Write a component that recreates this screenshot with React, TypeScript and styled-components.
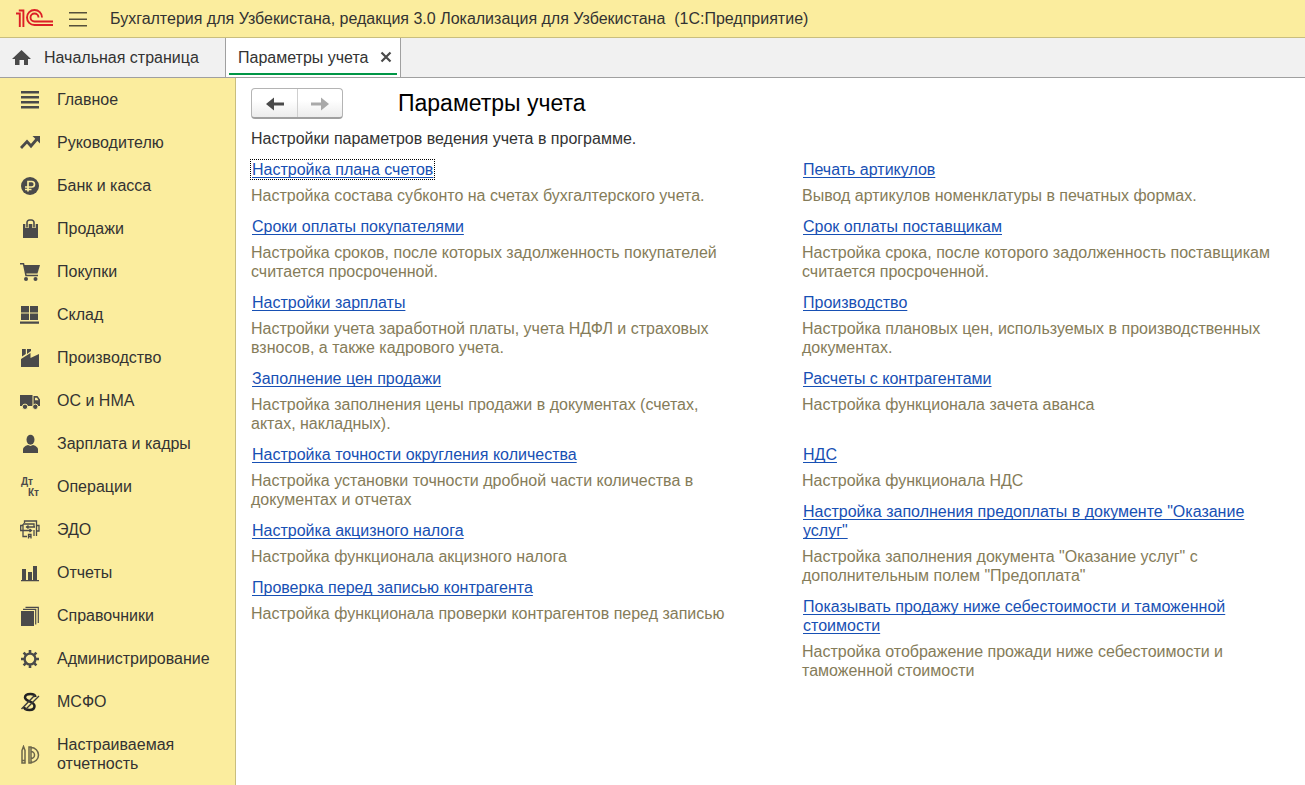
import React from "react";
import styled, { createGlobalStyle, css } from "styled-components";

const GlobalStyle = createGlobalStyle`
  *, *::before, *::after { box-sizing: border-box; }
  body {
    margin: 0;
    background: #ffffff;
    color: #333333;
    font: 16px/19px "Liberation Sans", Arial, sans-serif;
  }
  button { font: inherit; color: inherit; cursor: pointer; }
`;

const Page = styled.div`
  min-height: 100vh;
  display: flex;
  flex-direction: column;
`;

const TitleBar = styled.header`
  display: flex;
  align-items: center;
  height: 38px;
  padding: 0 16px;
  background: #fbed9e;
  border-bottom: 1px solid #c9be7e;
`;

const MenuButton = styled.button`
  display: flex;
  margin: 0 22px 0 15px;
  padding: 0;
  border: 0;
  background: none;
`;

const AppTitle = styled.div`
  white-space: pre;
`;

const TabBar = styled.nav`
  display: flex;
  height: 40px;
  background: #f1f1f1;
  border-bottom: 1px solid #a0a0a0;
`;

const HomeTab = styled.button`
  display: flex;
  align-items: center;
  gap: 13px;
  width: 225px;
  padding: 0 0 0 12px;
  border: 0;
  background: none;
`;

const ActiveTab = styled.div`
  display: flex;
  min-width: 176px;
  padding: 0 3px 2px;
  background: #ffffff;
  border: solid #a0a0a0;
  border-width: 0 1px;
`;

const TabInner = styled.div`
  flex: 1;
  display: flex;
  align-items: center;
  justify-content: space-between;
  gap: 8px;
  padding: 3px 5px 0 9px;
  border-bottom: 2px solid #009646;
`;

const PlainButton = styled.button`
  display: flex;
  padding: 0;
  border: 0;
  background: none;
`;

const Body = styled.div`
  flex: 1;
  display: flex;
`;

const Sidebar = styled.nav`
  flex: 0 0 236px;
  background: #fbed9e;
  border-right: 1px solid #c9be7e;
`;

const SectionButton = styled.button`
  display: flex;
  align-items: center;
  gap: 17px;
  width: 100%;
  padding: 12px 16px 12px 20px;
  border: 0;
  background: none;
  text-align: left;
  svg { flex: none; margin: -1px 0 -2px; }
`;

const Content = styled.main`
  flex: 1;
  min-width: 0;
  padding: 10px 22px 10px 15px;
`;

const Toolbar = styled.div`
  display: flex;
  align-items: flex-start;
  gap: 55px;
`;

const History = styled.div`
  display: flex;
  height: 31px;
  border: 1px solid #b4b4b4;
  border-bottom: 2px solid #a0a0a0;
  border-radius: 4px;
  background: linear-gradient(#ffffff 40%, #ececec);
`;

const HistoryButton = styled.button`
  display: flex;
  align-items: center;
  justify-content: center;
  width: 45px;
  padding: 2px 0 0;
  border: 0;
  background: none;
  & + & { border-left: 1px solid #cfcfcf; }
`;

const Heading = styled.h1`
  margin: 0;
  color: #000000;
  font-size: 23px;
  line-height: 30px;
  font-weight: 400;
`;

const Intro = styled.p`
  margin: 10px 0 12px;
`;

const Grid = styled.div`
  display: grid;
  grid-template-columns: 1fr 1fr;
  column-gap: 70px;
`;

const Entry = styled.section`
  padding-bottom: 12px;
`;

const EntryLink = styled.a<{ $focused?: boolean }>`
  display: inline-block;
  vertical-align: top;
  padding: 0 1px;
  color: #1750b4;
  text-decoration: underline;
  text-decoration-thickness: 1px;
  text-underline-offset: 2px;
  text-decoration-skip-ink: none;
  ${(p) => p.$focused && css`outline: 1px dotted #000000;`}
`;

const Description = styled.p`
  margin: 7px 0 0;
  color: #857c59;
`;

const ink = "#4a4a4a";

const Icon = ({ children }: { children: React.ReactNode }) => (
  <svg width="20" height="20" viewBox="0 0 20 20" fill={ink} aria-hidden="true">
    {children}
  </svg>
);

const sections: { label: string; icon: React.ReactNode }[] = [
  { label: "Главное", icon: <path d="M1 1h18v2.400H1zM1 6h18v2.400H1zM1 11h18v2.400H1zM1 16h18v2.400H1z" /> },
  { label: "Руководителю", icon: <><path d="M1 15l6-6.500 4 4.500 6-7" fill="none" stroke={ink} strokeWidth="2.800" /><path d="M12.500 3H20v7.500z" /></> },
  { label: "Банк и касса", icon: <><circle cx="10" cy="10" r="9" /><path d="M8 15.500V5.500h3.700a2.700 2.700 0 010 5.500H5M5 13.500H11.500" fill="none" stroke="#fbed9e" strokeWidth="1.700" /></> },
  { label: "Продажи", icon: <><path d="M3 5h15v14H3z" /><path d="M7 9V3.500a2.500 2.500 0 012.500-2.500h2A2.500 2.500 0 0114 3.500V9" fill="none" stroke="#fbed9e" strokeWidth="3.400" /><path d="M7 8.500V3.500a2.500 2.500 0 012.500-2.500h2A2.500 2.500 0 0114 3.500V8.500" fill="none" stroke={ink} strokeWidth="1.600" /></> },
  { label: "Покупки", icon: <><path d="M3.500 3H20l-2.500 8.500H6z" /><path d="M0 1.700h3.500L6 13.500h12" fill="none" stroke={ink} strokeWidth="1.500" /><circle cx="6" cy="17" r="2" /><circle cx="15.500" cy="17" r="2" /></> },
  { label: "Склад", icon: <path d="M1 1h8v6.500H1zM10 1h8v6.500h-8zM1 8.500h8V15H1zM10 8.500h8V15h-8zM0 16.500h19v2.300H0z" /> },
  { label: "Производство", icon: <path d="M2 1h3.800v5L2 8.500zM7 1h4v2L7 6zM1 11l9.500-6v5L19 6v13H1z" /> },
  { label: "ОС и НМА", icon: <><path d="M0 4h12.500v11H0zM13.500 5h4l2.500 3.500V15h-6.500z" /><path d="M15 6.800h2l1.500 2.500H15z" fill="#fbed9e" /><g stroke="#fbed9e"><circle cx="5" cy="15.800" r="2.700" /><circle cx="15.300" cy="15.800" r="2.700" /></g></> },
  { label: "Зарплата и кадры", icon: <><ellipse cx="10.500" cy="5.700" rx="4" ry="5" /><path d="M3 19v-3.500Q3 12.500 8 11l2.500 1L13 11q5 1.500 5 4.500V19z" /></> },
  { label: "Операции", icon: <g fontFamily="Liberation Sans, Arial, sans-serif" fontWeight="700" fontSize="10"><text x="1" y="8">Дт</text><text x="8" y="19">Кт</text></g> },
  { label: "ЭДО", icon: <g fill="none" stroke={ink} strokeWidth="1.300"><path d="M4.500 3V1H16.500V16M3 4H14V7M3 4v12.500H7M0.700 5.500H3v5H0.700zM16.500 5.500H19V11H16.500M6 7h9M3 10.500h8M14 10v6M8.500 5.500L6.500 7l2 1.500M9.500 9l2 1.500-2 1.500M8.500 18.500V14.500h2.500v4M8.500 16.500H11" /></g> },
  { label: "Отчеты", icon: <path d="M2 6h4v11H2zM8 9h4v8H8zM13 3h4v14h-4zM1 17h18v1.300H1z" /> },
  { label: "Справочники", icon: <><path d="M1 5h13v15H1z" /><path d="M3 3.300h12.700V18.500M5.500 1.300h12.800V17" fill="none" stroke={ink} strokeWidth="1.200" /></> },
  { label: "Администрирование", icon: <><circle cx="10" cy="10" r="5.400" fill="none" stroke={ink} strokeWidth="2.400" /><path d="M10 1v4M10 15v4M1 10h4M15 10h4M3.600 3.600l2.800 2.800M13.600 13.600l2.800 2.800M3.600 16.400l2.800-2.800M13.600 6.400l2.800-2.800" stroke={ink} strokeWidth="2.600" /></> },
  { label: "МСФО", icon: <><path d="M15.500 5Q15 2 10.500 2 5 2 5 5.500C5 9.500 14.500 9.500 14.500 14q0 4-5 4Q4.500 18 4 15" fill="none" stroke="#222222" strokeWidth="2.500" /><path d="M1.500 17L15 3M5.500 17.500L19 4" stroke="#3c3c3c" strokeWidth="1.400" /></> },
  { label: "Настраиваемая отчетность", icon: <g fill="none" stroke="#6b654a" strokeWidth="1.500"><path d="M2 5.500L3.500 1.500 5 5.500V18H2zM2 15.500H5M9 2h2v16H9zM11 2.500a7.500 7.500 0 010 15M11 6.500a3.500 3.500 0 010 7" /></g> },
];

type Item = { title: string; text: string; focused?: boolean };

/* Each row holds two cells; a cell stacks one or more entries. */
const rows: [Item[], Item[]][] = [
  [
    [{ title: "Настройка плана счетов", text: "Настройка состава субконто на счетах бухгалтерского учета.", focused: true }],
    [{ title: "Печать артикулов", text: "Вывод артикулов номенклатуры в печатных формах." }],
  ],
  [
    [{ title: "Сроки оплаты покупателями", text: "Настройка сроков, после которых задолженность покупателей считается просроченной." }],
    [{ title: "Срок оплаты поставщикам", text: "Настройка срока, после которого задолженность поставщикам считается просроченной." }],
  ],
  [
    [{ title: "Настройки зарплаты", text: "Настройки учета заработной платы, учета НДФЛ и страховых взносов, а также кадрового учета." }],
    [{ title: "Производство", text: "Настройка плановых цен, используемых в производственных документах." }],
  ],
  [
    [{ title: "Заполнение цен продажи", text: "Настройка заполнения цены продажи в документах (счетах, актах, накладных)." }],
    [{ title: "Расчеты с контрагентами", text: "Настройка функционала зачета аванса" }],
  ],
  [
    [
      { title: "Настройка точности округления количества", text: "Настройка установки точности дробной части количества в документах и отчетах" },
      { title: "Настройка акцизного налога", text: "Настройка функционала акцизного налога" },
      { title: "Проверка перед записью контрагента", text: "Настройка функционала проверки контрагентов перед записью" },
    ],
    [
      { title: "НДС", text: "Настройка функционала НДС" },
      { title: "Настройка заполнения предоплаты в документе \"Оказание услуг\"", text: "Настройка заполнения документа \"Оказание услуг\" с дополнительным полем \"Предоплата\"" },
      { title: "Показывать продажу ниже себестоимости и таможенной стоимости", text: "Настройка отображение прожади ниже себестоимости и таможенной стоимости" },
    ],
  ],
];

const Logo = () => (
  <svg width="37" height="20" viewBox="0 0 37 20" fill="none" stroke="#dc1f26" strokeWidth="1.900" role="img" aria-label="1С">
    <path d="M0 4.500h3.800V18M2.800 1.500h4.600V18" />
    <path d="M26 8.500a7.500 7.500 0 1 0-7.500 7.500H37M22.500 8.500a4 4 0 1 0-4 4H37" />
  </svg>
);

export default function App() {
  return (
    <Page>
      <GlobalStyle />
      <TitleBar>
        <Logo />
        <MenuButton aria-label="Меню">
          <svg width="20" height="16" viewBox="0 0 20 16" fill="#55503a"><path d="M1 1h18v1.500H1zM1 7.500h18V9H1zM1 14h18v1.500H1z" /></svg>
        </MenuButton>
        <AppTitle>Бухгалтерия для Узбекистана, редакция 3.0 Локализация для Узбекистана  (1С:Предприятие)</AppTitle>
      </TitleBar>
      <TabBar>
        <HomeTab>
          <svg width="19" height="16" viewBox="0 0 19 16" fill={ink} aria-hidden="true"><path d="M9.500 0L19 9h-3v6h-4v-5H7.500v5H3V9H0z" /></svg>
          Начальная страница
        </HomeTab>
        <ActiveTab>
          <TabInner>
            <span>Параметры учета</span>
            <PlainButton aria-label="Закрыть">
              <svg width="12" height="12" viewBox="0 0 12 12" stroke={ink} strokeWidth="2.200"><path d="M1.500 1.500l9 9M10.500 1.500l-9 9" /></svg>
            </PlainButton>
          </TabInner>
        </ActiveTab>
      </TabBar>
      <Body>
        <Sidebar>
          {sections.map((s) => (
            <SectionButton key={s.label}>
              <Icon>{s.icon}</Icon>
              <span>{s.label}</span>
            </SectionButton>
          ))}
        </Sidebar>
        <Content>
          <Toolbar>
            <History>
              <HistoryButton aria-label="Назад">
                <svg width="18" height="14" viewBox="0 0 18 14" fill={ink}><path d="M0 7l8-6.500v5h10v3H8v5z" /></svg>
              </HistoryButton>
              <HistoryButton aria-label="Вперед">
                <svg width="18" height="14" viewBox="0 0 18 14" fill="#a9a9a9"><path d="M18 7l-8-6.500v5H0v3h10v5z" /></svg>
              </HistoryButton>
            </History>
            <Heading>Параметры учета</Heading>
          </Toolbar>
          <Intro>Настройки параметров ведения учета в программе.</Intro>
          <Grid>
            {rows.flatMap((row, r) =>
              row.map((cell, c) => (
                <div key={`${r}-${c}`}>
                  {cell.map((item) => (
                    <Entry key={item.title}>
                      <EntryLink href="#" $focused={item.focused}>{item.title}</EntryLink>
                      <Description>{item.text}</Description>
                    </Entry>
                  ))}
                </div>
              ))
            )}
          </Grid>
        </Content>
      </Body>
    </Page>
  );
}
